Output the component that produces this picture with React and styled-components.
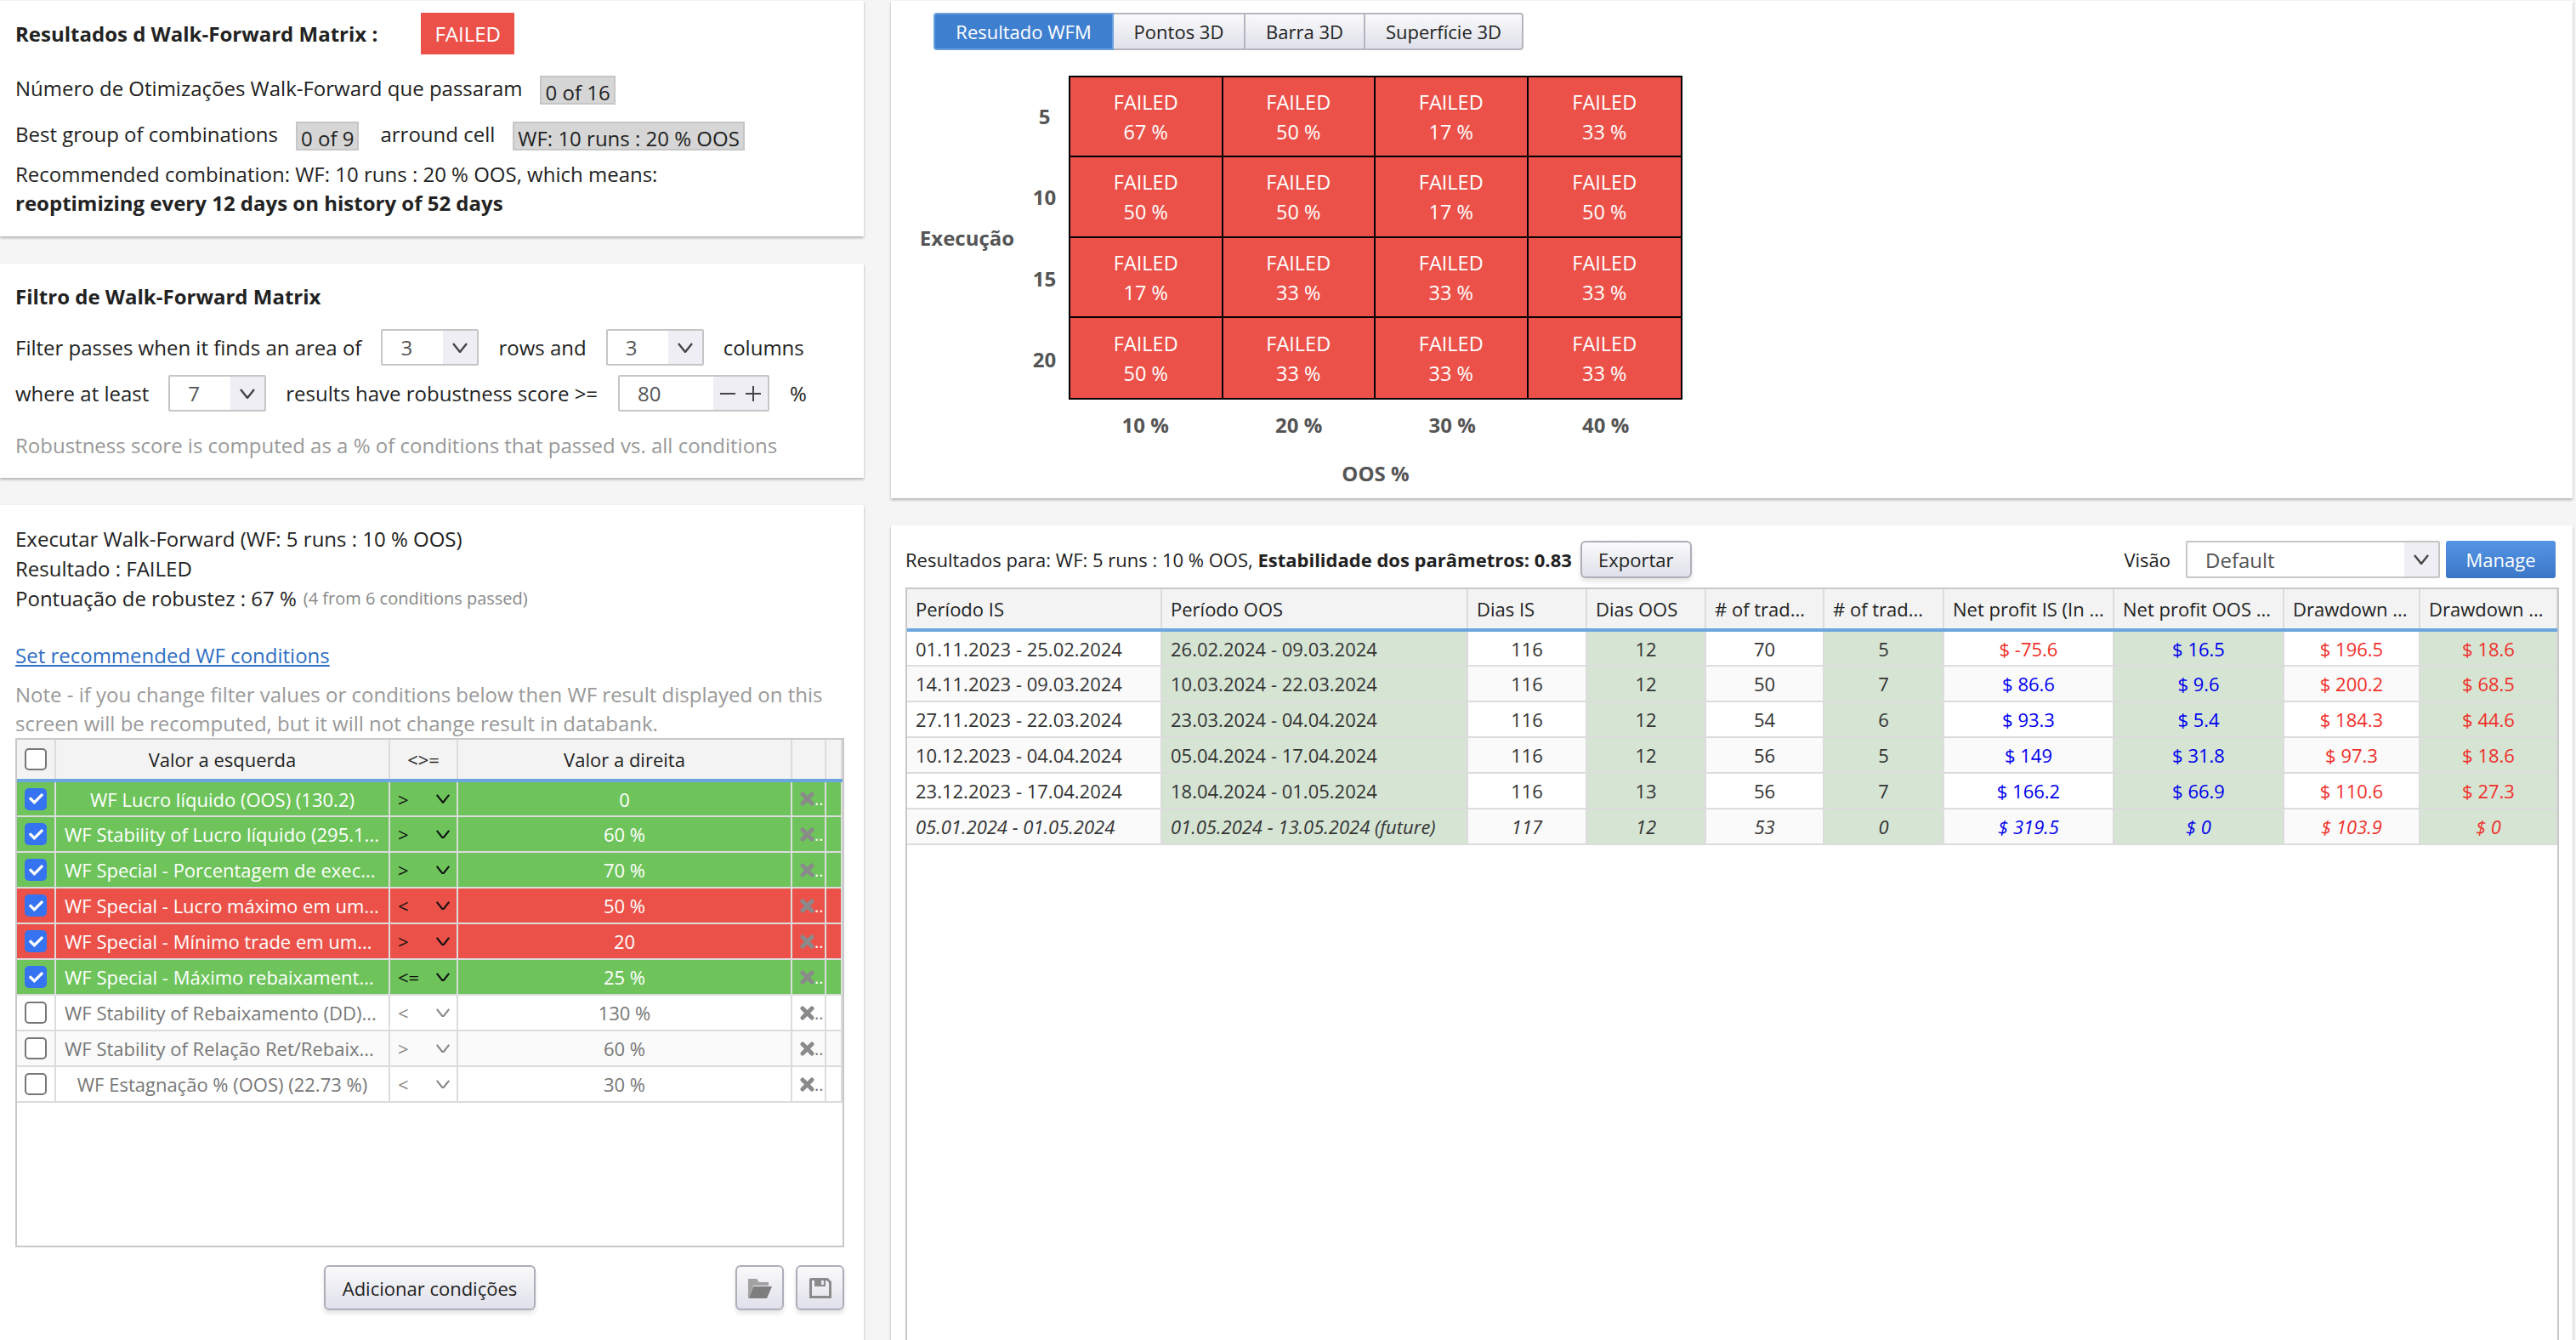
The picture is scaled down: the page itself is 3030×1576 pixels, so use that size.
import React from "react";
import styled, { createGlobalStyle } from "styled-components";
import { FaCheck } from "react-icons/fa";

const GlobalStyle = createGlobalStyle`
  html, body {
    margin: 0;
    height: 1576px;
    overflow: hidden;
    background: #f5f5f5;
    font-family: "Open Sans", "Liberation Sans", sans-serif;
    font-size: 24px;
    color: #222;
  }
  * { box-sizing: border-box; }
`;

const RED = "#ec5149";
const GREEN = "#6ec45b";
const PALE = "#d5e4d3";

const Page = styled.div`
  display: grid;
  grid-template-columns: 1016px 1978px;
  column-gap: 32px;
  padding-top: 1px;
  height: 1576px;
`;
const Column = styled.div`
  display: flex;
  flex-direction: column;
  gap: 32px;
  min-width: 0;
`;
const Panel = styled.section`
  background: #fff;
  box-shadow: 0 2px 3px rgba(0, 0, 0, 0.28);
  height: ${(p) => p.$h}px;
  padding: ${(p) => p.$pad || "0 18px"};
  display: flex;
  flex-direction: column;
  flex: ${(p) => (p.$grow ? 1 : "none")};
  min-height: 0;
`;
const Line = styled.div`
  display: flex;
  align-items: center;
  height: ${(p) => p.$h || 34}px;
  margin-top: ${(p) => p.$mt || 0}px;
  white-space: nowrap;
  color: ${(p) => p.$color || "inherit"};
  font-weight: ${(p) => (p.$bold ? 700 : 400)};
`;
const Failed = styled.span`
  background: ${RED};
  color: #fff;
  width: 110px;
  height: 49px;
  display: flex;
  align-items: center;
  justify-content: center;
  margin-left: 51px;
  font-weight: 400;
`;
const Tag = styled.span`
  background: #d6d6d6;
  border: 2px solid #c6c6c6;
  height: 34px;
  padding: 4px 4px 0;
  display: inline-flex;
  align-items: center;
  margin-left: ${(p) => p.$ml || 0}px;
  position: relative;
  top: 3px;
`;
const Spaced = styled.span`
  margin-left: ${(p) => p.$ml || 0}px;
`;
const SelectBox = styled.div`
  width: ${(p) => p.$w || 115}px;
  height: ${(p) => p.$h || 43}px;
  border: 2px solid #c6c6c6;
  border-radius: 2px;
  background: #fff;
  display: flex;
  color: #555;
  font-size: 24px;
  margin: 0 ${(p) => p.$mr ?? 23}px 0 ${(p) => p.$ml ?? 23}px;
  flex: none;
`;
const SelectValue = styled.span`
  flex: 1;
  padding-left: 21px;
  display: flex;
  align-items: center;
`;
const SelectArrow = styled.span`
  width: ${(p) => p.$w || 40}px;
  background: #eeeef4;
  display: flex;
  align-items: center;
  justify-content: center;
  gap: 10px;
  color: #444;
`;
const Chevron = ({ size = 20 }) => (
  <svg width={size} height={size * 0.6} viewBox="0 0 20 12" fill="none">
    <path d="M2 1 L10 11 L18 1" stroke="currentColor" strokeWidth="2.4" />
  </svg>
);
const Stepper = ({ plus }) => (
  <svg width="20" height="20" viewBox="0 0 20 20" fill="none">
    <path d={plus ? "M1 10 H19 M10 1 V19" : "M1 10 H19"} stroke="currentColor" strokeWidth="2" />
  </svg>
);
const Select = ({ value }) => (
  <SelectBox>
    <SelectValue>{value}</SelectValue>
    <SelectArrow>
      <Chevron />
    </SelectArrow>
  </SelectBox>
);
const Anchor = styled.a`
  color: #2f6fc4;
  text-decoration: underline;
`;
const Small = styled.span`
  font-size: 20px;
  color: #888;
  margin-left: 8px;
`;

/* tables */
const Box = styled.div`
  border: 2px solid #c8c8c8;
  border-bottom-width: ${(p) => (p.$open ? 0 : 2)}px;
  margin-top: ${(p) => p.$mt || 0}px;
  flex: none;
  background: #fff;
  height: ${(p) => p.$h}px;
  overflow: hidden;
`;
const Grid = styled.table`
  border-collapse: collapse;
  table-layout: fixed;
  width: 100%;
`;
const Head = styled.th`
  height: 48px;
  padding: 0 ${(p) => (p.$left ? 10 : 0)}px;
  background: #f3f3f3;
  border-right: 2px solid #dcdcdc;
  border-bottom: 4px solid #6ba6e0;
  font-weight: 400;
  font-size: 22px;
  color: #222;
  text-align: ${(p) => (p.$left ? "left" : "center")};
  white-space: nowrap;
  overflow: hidden;
`;
const rowColor = { pass: "#fff", fail: "#fff", off: "#777" };
const rowBg = { pass: GREEN, fail: RED };
const Cell = styled.td`
  height: 42px;
  padding: ${(p) => (p.$pad === undefined ? "0 10px" : p.$pad)};
  background: ${(p) => rowBg[p.$kind] || (p.$odd ? "#fafafa" : "#fff")};
  color: ${(p) => rowColor[p.$kind]};
  border-right: 2px solid #dcdcdc;
  border-bottom: 2px solid #dcdcdc;
  font-size: 22px;
  text-align: ${(p) => (p.$left ? "left" : "center")};
  white-space: nowrap;
  overflow: hidden;
`;
const OpInner = styled.div`
  display: flex;
  justify-content: space-between;
  align-items: center;
  padding: 0 7px 0 9px;
  color: ${(p) => (p.$off ? "#888" : "#111")};
`;
const Check = styled.span`
  display: flex;
  align-items: center;
  justify-content: center;
  width: 26px;
  height: 26px;
  margin: 0 auto;
  border-radius: 5px;
  color: #fff;
  font-size: 17px;
  background: ${(p) => (p.$on ? "#3573f0" : "#fff")};
  border: 2px solid ${(p) => (p.$on ? "#3573f0" : "#777")};
`;
const Cross = styled.div`
  display: flex;
  align-items: center;
  padding-left: 9px;
  font-size: 20px;
  overflow: hidden;
  svg {
    flex: none;
  }
`;
const CrossIcon = () => (
  <svg width="17" height="17" viewBox="0 0 17 17" fill="none">
    <path d="M3 3 L14 14 M14 3 L3 14" stroke="#8a8a8a" strokeWidth="5" strokeLinecap="round" />
  </svg>
);
const Footer = styled.div`
  display: grid;
  grid-template-columns: 1fr auto 1fr;
  align-items: center;
  margin-top: 21px;
`;
const Button = styled.button`
  font: inherit;
  font-size: 22px;
  height: ${(p) => p.$h || 53}px;
  width: ${(p) => p.$w}px;
  color: #222;
  padding: 0;
  background: linear-gradient(#fafafb, #dfe0ea);
  border: 2px solid #adaeba;
  border-radius: 6px;
  box-shadow: 0 4px 5px rgba(0, 0, 0, 0.1);
  display: inline-flex;
  align-items: center;
  justify-content: center;
`;
const ManageButton = styled(Button)`
  color: #fff;
  border: none;
  box-shadow: none;
  border-radius: 3px;
  background: linear-gradient(#5595e6, #3b76c6);
`;
const IconRow = styled.div`
  display: flex;
  gap: 14px;
  justify-content: flex-end;
`;
const FolderIcon = () => (
  <svg width="28" height="24" viewBox="0 0 28 24">
    <path d="M0 1 H10 L13 5 H24 V9 H6 L1 24 H0 Z" fill="#a2a2a2" />
    <path d="M6 10 H28 L22 24 H1 Z" fill="#7d7d7d" />
  </svg>
);
const SaveIcon = () => (
  <svg width="26" height="24" viewBox="0 0 26 24" fill="none">
    <path d="M2 1.5 H21 L24.5 5 V22.5 H1.5 V2 Z" stroke="#8a8a8a" strokeWidth="3" />
    <path d="M6 2 H19 V10 H6 Z" fill="#8a8a8a" />
    <path d="M14 3 H17 V8 H14 Z" fill="#e6e6ee" />
  </svg>
);

/* right side */
const Tabs = styled.div`
  display: flex;
  width: 694px;
  height: 44px;
  margin: 14px 0 0 50px;
  flex: none;
`;
const Tab = styled.div`
  width: ${(p) => p.$w}px;
  display: flex;
  align-items: center;
  justify-content: center;
  font-size: 22px;
  color: ${(p) => (p.$active ? "#fff" : "#222")};
  background: ${(p) => (p.$active ? "#3f7fd0" : "linear-gradient(#fafafb, #dfe0ea)")};
  border: 2px solid ${(p) => (p.$active ? "#6aa0de" : "#b4b5c0")};
  border-left-width: ${(p) => (p.$first ? 2 : 0)}px;
  border-radius: ${(p) => (p.$first ? "4px 0 0 4px" : p.$last ? "0 4px 4px 0" : "0")};
`;
const Matrix = styled.div`
  display: grid;
  grid-template-columns: 125px 57px repeat(4, 180.5px);
  grid-template-rows: repeat(4, 95.25px) 58px 57px;
  margin: 30px 0 0 27px;
  flex: none;
`;
const AxisLabel = styled.div`
  grid-column: ${(p) => p.$col};
  grid-row: ${(p) => p.$row};
  font-weight: 700;
  color: #555;
  font-size: 24px;
  display: flex;
  align-items: center;
  justify-content: center;
`;
const MatrixBody = styled.div`
  grid-column: 3 / span 4;
  grid-row: 1 / span 4;
  display: grid;
  grid-template-columns: repeat(4, 1fr);
  grid-template-rows: repeat(4, 1fr);
  border: 2px solid #000;
`;
const MatrixCell = styled.div`
  background: ${RED};
  color: #fff;
  font-size: 23.5px;
  line-height: 35px;
  padding-top: 2px;
  text-align: center;
  display: flex;
  flex-direction: column;
  align-items: center;
  justify-content: center;
  border-right: ${(p) => (p.$c < 3 ? "2px solid #000" : "none")};
  border-bottom: ${(p) => (p.$r < 3 ? "2px solid #000" : "none")};
`;
const ResultBar = styled.div`
  display: flex;
  align-items: center;
  height: 46px;
  margin-top: 17px;
  white-space: nowrap;
  font-size: 22px;
  flex: none;
`;
const ViewPicker = styled.div`
  margin-left: auto;
  margin-right: 4px;
  display: flex;
  align-items: center;
`;
const Amount = styled.span`
  color: ${(p) => (p.$c === "b" ? "#0000ee" : "#f0302a")};
`;
const DataCell = styled(Cell)`
  background: ${(p) => (p.$pale ? PALE : p.$odd ? "#fafafa" : "#fff")};
  color: #333;
  font-style: ${(p) => (p.$future ? "italic" : "normal")};
`;

const conditions = [
  ["pass", "WF Lucro líquido (OOS) (130.2)", ">", "0"],
  ["pass", "WF Stability of Lucro líquido (295.1...", ">", "60 %"],
  ["pass", "WF Special - Porcentagem de exec...", ">", "70 %"],
  ["fail", "WF Special - Lucro máximo em um...", "<", "50 %"],
  ["fail", "WF Special - Mínimo trade em um...", ">", "20"],
  ["pass", "WF Special - Máximo rebaixament...", "<=", "25 %"],
  ["off", "WF Stability of Rebaixamento (DD)...", "<", "130 %"],
  ["off", "WF Stability of Relação Ret/Rebaix...", ">", "60 %"],
  ["off", "WF Estagnação % (OOS) (22.73 %)", "<", "30 %"],
];
const matrix = [
  [67, 50, 17, 33],
  [50, 50, 17, 50],
  [17, 33, 33, 33],
  [50, 33, 33, 33],
];
const columns = [
  ["Período IS", 299],
  ["Período OOS", 360],
  ["Dias IS", 140],
  ["Dias OOS", 140],
  ["# of trad...", 139],
  ["# of trad...", 141],
  ["Net profit IS (In ...", 200],
  ["Net profit OOS ...", 200],
  ["Drawdown ...", 160],
  ["Drawdown ...", 162],
];
const results = [
  ["01.11.2023 - 25.02.2024", "26.02.2024 - 09.03.2024", 116, 12, 70, 5, ["r", "$ -75.6"], ["b", "$ 16.5"], ["r", "$ 196.5"], ["r", "$ 18.6"]],
  ["14.11.2023 - 09.03.2024", "10.03.2024 - 22.03.2024", 116, 12, 50, 7, ["b", "$ 86.6"], ["b", "$ 9.6"], ["r", "$ 200.2"], ["r", "$ 68.5"]],
  ["27.11.2023 - 22.03.2024", "23.03.2024 - 04.04.2024", 116, 12, 54, 6, ["b", "$ 93.3"], ["b", "$ 5.4"], ["r", "$ 184.3"], ["r", "$ 44.6"]],
  ["10.12.2023 - 04.04.2024", "05.04.2024 - 17.04.2024", 116, 12, 56, 5, ["b", "$ 149"], ["b", "$ 31.8"], ["r", "$ 97.3"], ["r", "$ 18.6"]],
  ["23.12.2023 - 17.04.2024", "18.04.2024 - 01.05.2024", 116, 13, 56, 7, ["b", "$ 166.2"], ["b", "$ 66.9"], ["r", "$ 110.6"], ["r", "$ 27.3"]],
  ["05.01.2024 - 01.05.2024", "01.05.2024 - 13.05.2024 (future)", 117, 12, 53, 0, ["b", "$ 319.5"], ["b", "$ 0"], ["r", "$ 103.9"], ["r", "$ 0"]],
];

const App = () => (
  <>
    <GlobalStyle />
    <Page>
      <Column>
        <Panel $h={277} $pad="14px 18px 0">
          <Line $h={49} $bold>
            Resultados d Walk-Forward Matrix :<Failed>FAILED</Failed>
          </Line>
          <Line $mt={22}>
            Número de Otimizações Walk-Forward que passaram
            <Tag $ml={21}>0 of 16</Tag>
          </Line>
          <Line $mt={20}>
            Best group of combinations
            <Tag $ml={21}>0 of 9</Tag>
            <Spaced $ml={25}>arround cell</Spaced>
            <Tag $ml={21}>WF: 10 runs : 20 % OOS</Tag>
          </Line>
          <Line $mt={13}>Recommended combination: WF: 10 runs : 20 % OOS, which means:</Line>
          <Line $bold>reoptimizing every 12 days on history of 52 days</Line>
        </Panel>
        <Panel $h={252} $pad="21px 18px 0">
          <Line $bold>Filtro de Walk-Forward Matrix</Line>
          <Line $h={43} $mt={22}>
            Filter passes when it finds an area of
            <Select value="3" />
            rows and
            <Select value="3" />
            columns
          </Line>
          <Line $h={43} $mt={11}>
            where at least
            <Select value="7" />
            results have robustness score &gt;=
            <SelectBox $w={178} $ml={24} $mr={24}>
              <SelectValue>80</SelectValue>
              <SelectArrow $w={64}>
                <Stepper />
                <Stepper plus />
              </SelectArrow>
            </SelectBox>
            %
          </Line>
          <Line $mt={22} $color="#999">
            Robustness score is computed as a % of conditions that passed vs. all conditions
          </Line>
        </Panel>
        <Panel $grow $pad="22px 23px 0 18px">
          <Line $h={35}>Executar Walk-Forward (WF: 5 runs : 10 % OOS)</Line>
          <Line $h={35}>Resultado : FAILED</Line>
          <Line $h={35}>
            Pontuação de robustez : 67 %<Small>(4 from 6 conditions passed)</Small>
          </Line>
          <Line $mt={32}>
            <Anchor>Set recommended WF conditions</Anchor>
          </Line>
          <Line $mt={12} $color="#999">
            Note - if you change filter values or conditions below then WF result displayed on this
          </Line>
          <Line $color="#999">screen will be recomputed, but it will not change result in databank.</Line>
          <Box $h={599} $mt={1}>
            <Grid>
              <colgroup>
                <col width="45" />
                <col width="393" />
                <col width="80" />
                <col width="393" />
                <col width="40" />
                <col />
              </colgroup>
              <thead>
                <tr>
                  <Head>
                    <Check />
                  </Head>
                  <Head>Valor a esquerda</Head>
                  <Head>&lt;&gt;=</Head>
                  <Head>Valor a direita</Head>
                  <Head />
                  <Head />
                </tr>
              </thead>
              <tbody>
                {conditions.map(([kind, label, op, value], i) => (
                  <tr key={i}>
                    <Cell $kind={kind} $odd={i % 2} $pad="0">
                      <Check $on={kind !== "off"}>{kind !== "off" && <FaCheck />}</Check>
                    </Cell>
                    <Cell $kind={kind} $odd={i % 2} $left={label.endsWith("...")}>
                      {label}
                    </Cell>
                    <Cell $kind={kind} $odd={i % 2} $pad="0">
                      <OpInner $off={kind === "off"}>
                        <span>{op}</span>
                        <Chevron size={18} />
                      </OpInner>
                    </Cell>
                    <Cell $kind={kind} $odd={i % 2}>
                      {value}
                    </Cell>
                    <Cell $kind={kind} $odd={i % 2} $pad="0">
                      <Cross>
                        <CrossIcon />
                        ..
                      </Cross>
                    </Cell>
                    <Cell $kind={kind} $odd={i % 2} $pad="0" />
                  </tr>
                ))}
              </tbody>
            </Grid>
          </Box>
          <Footer>
            <span />
            <Button $w={249}>Adicionar condições</Button>
            <IconRow>
              <Button $w={57}>
                <FolderIcon />
              </Button>
              <Button $w={57}>
                <SaveIcon />
              </Button>
            </IconRow>
          </Footer>
        </Panel>
      </Column>
      <Column>
        <Panel $h={585} $pad="0">
          <Tabs>
            <Tab $active $first $w={212}>
              Resultado WFM
            </Tab>
            <Tab $w={155}>Pontos 3D</Tab>
            <Tab $w={141}>Barra 3D</Tab>
            <Tab $last $w={186}>
              Superfície 3D
            </Tab>
          </Tabs>
          <Matrix>
            <AxisLabel $col="1" $row="1 / span 4">
              Execução
            </AxisLabel>
            {[5, 10, 15, 20].map((n, r) => (
              <AxisLabel key={n} $col="2" $row={r + 1}>
                {n}
              </AxisLabel>
            ))}
            <MatrixBody>
              {matrix.flatMap((row, r) =>
                row.map((v, c) => (
                  <MatrixCell key={`${r}-${c}`} $r={r} $c={c}>
                    <span>FAILED</span>
                    <span>{v} %</span>
                  </MatrixCell>
                ))
              )}
            </MatrixBody>
            {[10, 20, 30, 40].map((n, c) => (
              <AxisLabel key={n} $col={c + 3} $row="5">
                {n} %
              </AxisLabel>
            ))}
            <AxisLabel $col="3 / span 4" $row="6">
              OOS %
            </AxisLabel>
          </Matrix>
        </Panel>
        <Panel $grow $pad="0 16px 0 17px">
          <ResultBar>
            Resultados para: WF: 5 runs : 10 % OOS,&nbsp;<b>Estabilidade dos parâmetros: 0.83</b>
            <Spaced $ml={10}>
              <Button $w={131} $h={44}>
                Exportar
              </Button>
            </Spaced>
            <ViewPicker>
              Visão
              <SelectBox $w={299} $h={44} $ml={18} $mr={7}>
                <SelectValue>Default</SelectValue>
                <SelectArrow>
                  <Chevron />
                </SelectArrow>
              </SelectBox>
              <ManageButton $w={129} $h={44}>
                Manage
              </ManageButton>
            </ViewPicker>
          </ResultBar>
          <Box $h={900} $mt={10} $open>
            <Grid>
              <colgroup>
                {columns.map(([, w], i) => (
                  <col key={i} width={w} />
                ))}
              </colgroup>
              <thead>
                <tr>
                  {columns.map(([name], i) => (
                    <Head key={i} $left>
                      {name}
                    </Head>
                  ))}
                </tr>
              </thead>
              <tbody>
                {results.map((row, r) => (
                  <tr key={r}>
                    {row.map((v, c) => (
                      <DataCell key={c} $left={c < 2} $pale={c % 2 === 1} $odd={r % 2} $future={r === 5}>
                        {Array.isArray(v) ? <Amount $c={v[0]}>{v[1]}</Amount> : v}
                      </DataCell>
                    ))}
                  </tr>
                ))}
              </tbody>
            </Grid>
          </Box>
        </Panel>
      </Column>
    </Page>
  </>
);

export default App;
